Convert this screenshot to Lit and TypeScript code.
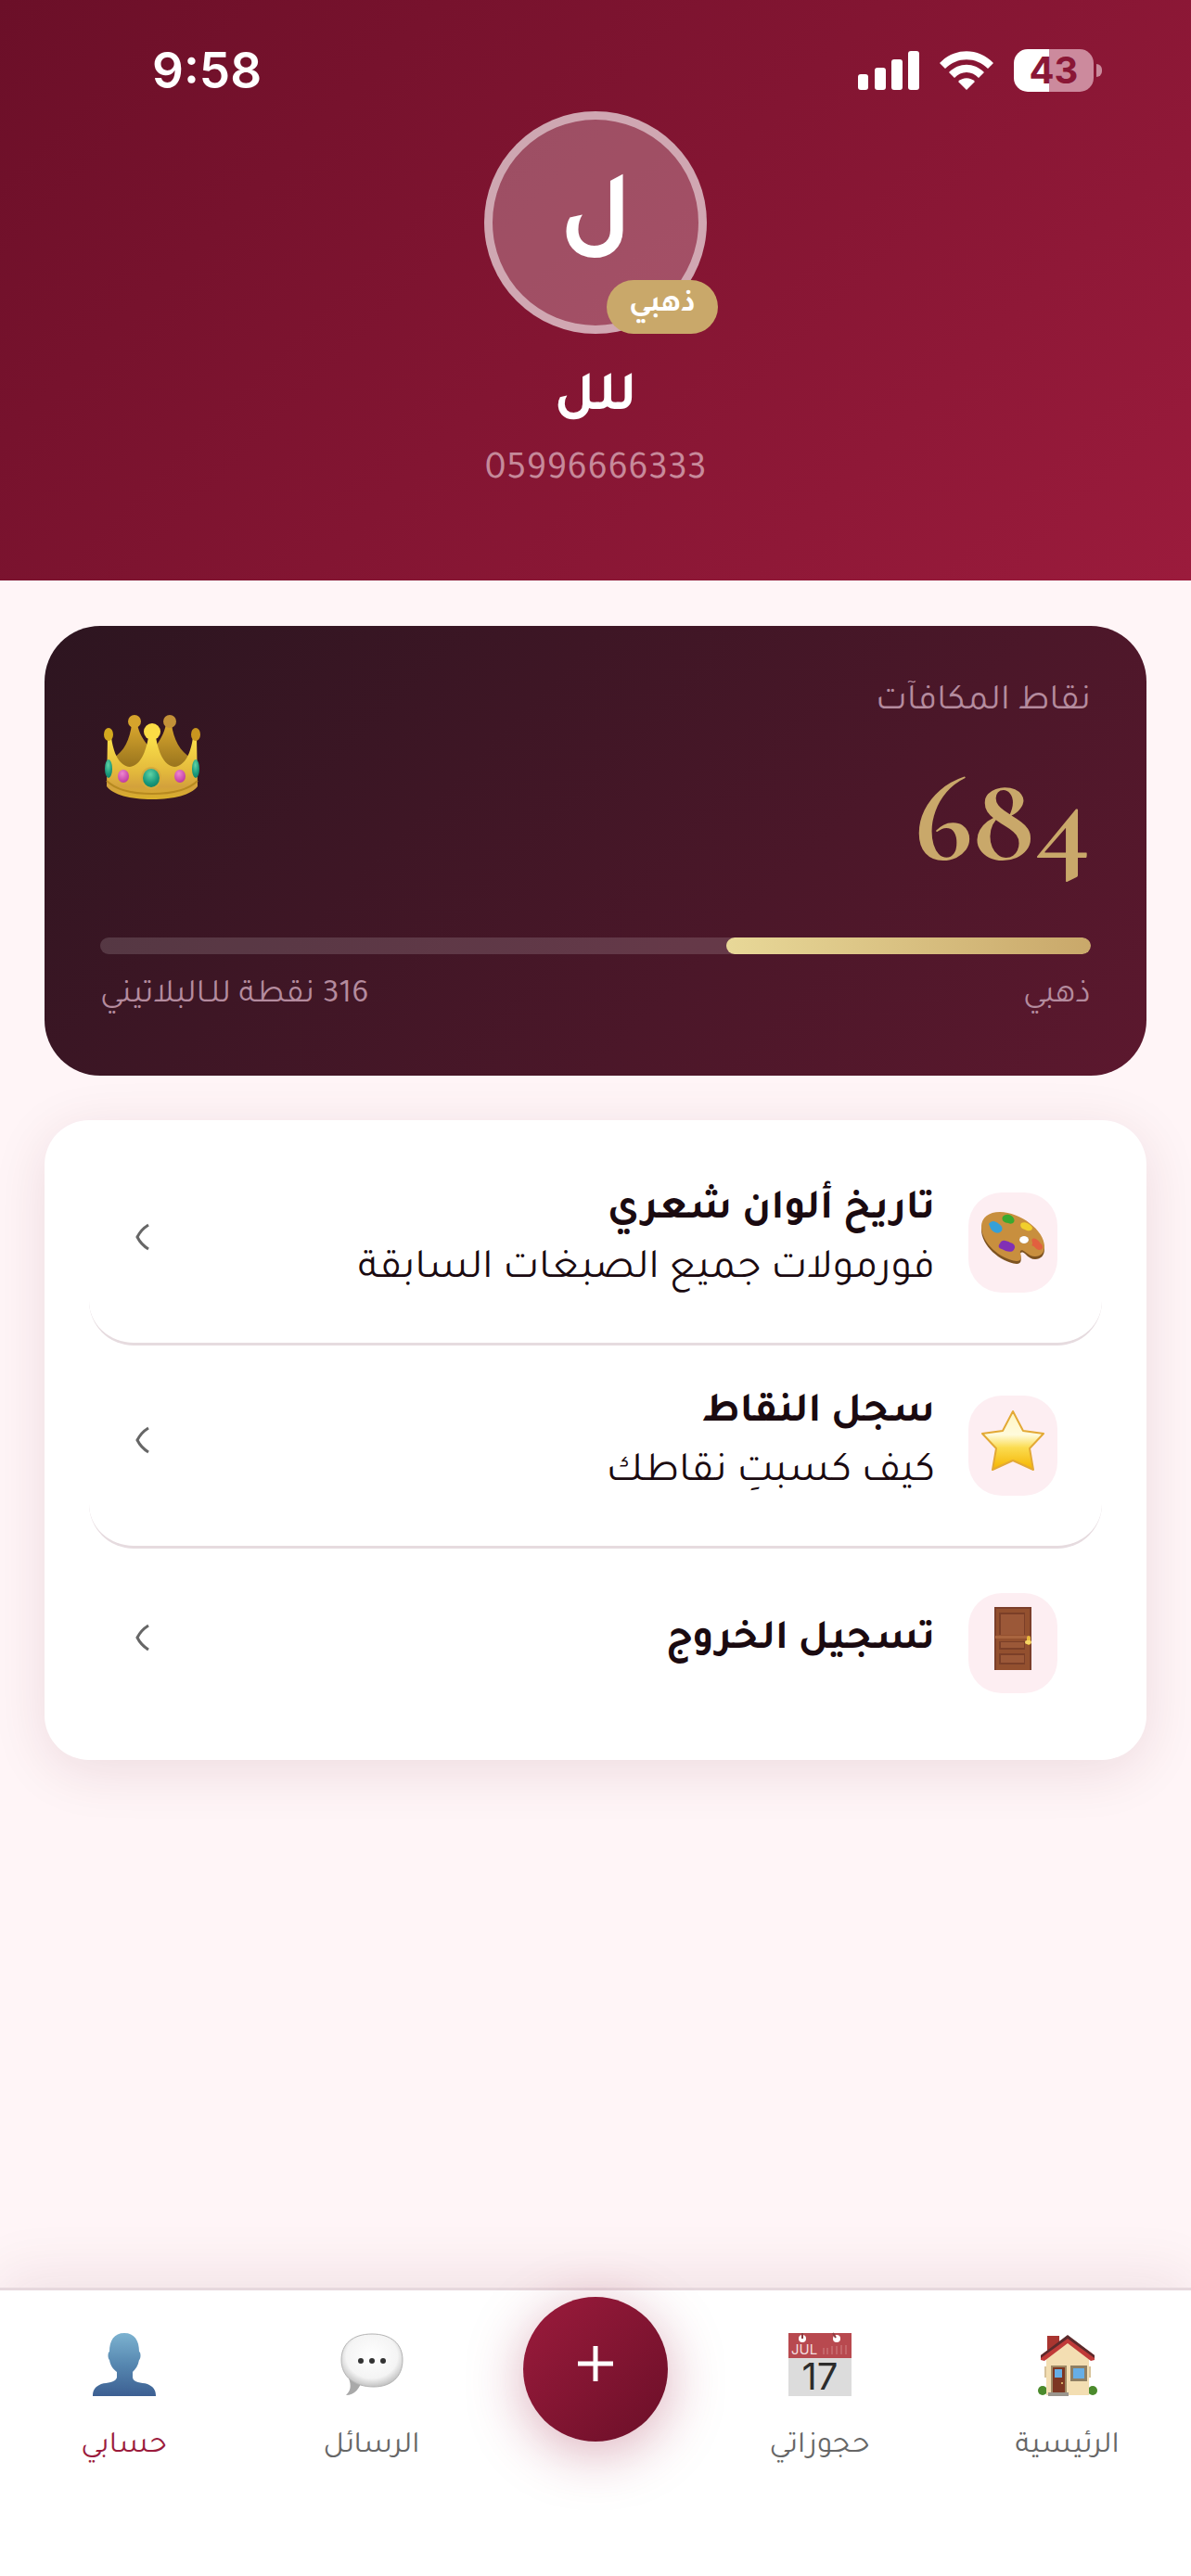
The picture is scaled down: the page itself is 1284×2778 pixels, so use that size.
import { LitElement, html, css, nothing, type TemplateResult } from "lit";
import { customElement } from "lit/decorators.js";

const crown = html`<svg viewBox="0 0 104 92" width="104" height="92" aria-hidden="true">
  <defs>
    <linearGradient id="crownFront" x1="0" y1="0" x2="0" y2="1">
      <stop offset="0" stop-color="#fbe04a" /><stop offset=".55" stop-color="#e3b93c" />
      <stop offset=".8" stop-color="#d3a13c" /><stop offset="1" stop-color="#d9b02a" />
    </linearGradient>
    <linearGradient id="crownBack" x1="0" y1="0" x2="0" y2="1">
      <stop offset="0" stop-color="#d9a72e" /><stop offset="1" stop-color="#94701c" />
    </linearGradient>
    <radialGradient id="gemGreen" cx=".45" cy=".3" r=".8">
      <stop offset="0" stop-color="#5fd3a6" /><stop offset=".6" stop-color="#1a9a7c" /><stop offset="1" stop-color="#0d7a62" />
    </radialGradient>
    <radialGradient id="gemPink" cx=".4" cy=".3" r=".8">
      <stop offset="0" stop-color="#ee86cf" /><stop offset="1" stop-color="#b92f9c" />
    </radialGradient>
  </defs>
  <path d="M10 46C22 40 28 26 30 10H36C38 20 42 26 48 34L40 60H18Z" fill="url(#crownBack)" />
  <path d="M94 46C82 40 75 26 73 10H67C65 20 61 26 56 34L64 60H86Z" fill="url(#crownBack)" />
  <circle cx="33" cy="7" r="7" fill="#d6a42c" />
  <circle cx="71" cy="7" r="7" fill="#c39138" />
  <path d="M4 24H8C10 40 16 55 28 56C40 54 45 40 48 24H56C59 40 64 54 76 56C88 55 94 40 96 24H100L101 77C94 86 76 91 52 91C28 91 10 86 3 77Z" fill="url(#crownFront)" />
  <path d="M3 71C12 80 30 85 52 85C74 85 92 80 101 71" fill="none" stroke="#b78a20" stroke-width="2" />
  <circle cx="52" cy="18" r="9" fill="#fbdc45" />
  <ellipse cx="5" cy="21" rx="5" ry="7" fill="#d3a91f" />
  <ellipse cx="99" cy="21" rx="5" ry="7" fill="#c8951f" />
  <ellipse cx="51" cy="68" rx="11" ry="12" fill="#d6ab3c" />
  <ellipse cx="51" cy="68" rx="9" ry="10" fill="url(#gemGreen)" />
  <ellipse cx="21" cy="66" rx="6" ry="7" fill="url(#gemPink)" />
  <ellipse cx="82" cy="66" rx="6" ry="7" fill="url(#gemPink)" />
  <ellipse cx="5" cy="58" rx="4" ry="10" fill="url(#gemGreen)" />
  <ellipse cx="99" cy="58" rx="4" ry="10" fill="url(#gemGreen)" />
</svg>`;

const palette = html`<svg viewBox="0 0 68 68" width="68" height="68" aria-hidden="true">
  <g transform="translate(0 6)">
    <path d="M0 19C0 8 8 3 20 3C42 3 68 22 68 40C68 47 64 51 58 51C54 51 51 49 47 45C44 43 42 43 42 46C43 50 44 56 38 56C20 54 0 36 0 19Z" fill="#7d5320" />
    <path fill-rule="evenodd" d="M0 16C0 6 8 0 20 0C42 0 68 20 68 37C68 44 64 48 58 48C54 48 51 46 47 43C44 40 41 41 42 44C43 48 44 53 38 53C20 51 0 33 0 16ZM41 30A5 4 0 1 0 51 30A5 4 0 1 0 41 30Z" fill="#c88f3e" />
    <ellipse cx="46" cy="30" rx="5" ry="4" fill="#fff" />
    <path d="M8 13C11 8 16 10 19 13C23 15 24 20 20 22C16 24 12 21 10 18Z" fill="#35a0d8" />
    <path d="M23 5C27 1 33 3 35 7C37 11 33 14 29 12C25 12 21 9 23 5Z" fill="#3aa92f" />
    <path d="M43 12C47 10 53 13 55 17C55 21 50 21 47 19C43 18 41 15 43 12Z" fill="#f1cf2c" />
    <path d="M55 29C59 27 62 32 65 35C67 38 66 41 62 41C58 40 58 37 54 36C57 34 53 31 55 29Z" fill="#e2603f" />
    <path d="M20 34C22 29 27 31 31 33C36 34 38 38 34 42C30 44 26 42 22 40C18 39 18 36 20 34Z" fill="#8130b5" />
  </g>
</svg>`;

const star = html`<svg viewBox="0 0 68 68" width="68" height="68" aria-hidden="true">
  <defs><linearGradient id="starFill" x1="0" y1="0" x2="0" y2="1">
    <stop offset="0" stop-color="#fff6c2" /><stop offset=".4" stop-color="#fffbdc" />
    <stop offset=".62" stop-color="#fbdc50" /><stop offset="1" stop-color="#f5b400" />
  </linearGradient></defs>
  <path d="M34 2L45 23L67 26L52 42L56 65L34 55L12 65L16 42L1 26L23 23Z" fill="url(#starFill)" stroke="#e3a935" stroke-width="2" stroke-linejoin="round" />
</svg>`;

const door = html`<svg viewBox="0 0 68 68" width="68" height="68" aria-hidden="true">
  <rect x="14" y="0" width="40" height="68" fill="#7b3f2b" />
  <rect x="16" y="2" width="36" height="66" fill="#93502f" />
  <rect x="19" y="6" width="28" height="24" fill="#7b3f28" />
  <rect x="21" y="8" width="25" height="22" fill="#9b5838" />
  <rect x="15" y="31" width="37" height="3" fill="#a9653f" />
  <rect x="19" y="37" width="28" height="9" fill="#7b3f28" />
  <rect x="21" y="38" width="25" height="6" fill="#9b5838" />
  <rect x="19" y="50" width="28" height="12" fill="#7b3f28" />
  <rect x="21" y="52" width="25" height="8" fill="#9b5838" />
  <rect x="49" y="31" width="4" height="10" rx="2" fill="#e9b93c" />
  <rect x="47" y="36" width="7" height="4" rx="2" fill="#f7d765" />
</svg>`;

const house = html`<svg viewBox="0 0 68 68" width="68" height="68" aria-hidden="true">
  <g transform="translate(2 2)">
    <circle cx="5" cy="60" r="5" fill="#4b8a2c" /><circle cx="59" cy="60" r="5" fill="#4b8a2c" />
    <path d="M10 1H23V12L10 22Z" fill="#a93530" />
    <path d="M9 24L32 4L55 24V65H9Z" fill="#f3deb2" />
    <path d="M7 34H9V46H7ZM55 34H57V46H55Z" fill="#d7c29a" />
    <path d="M32 1L61 22V27L57 28L32 9L7 28L3 27V22Z" fill="#c03a38" />
    <path d="M32 0L61 22V25L32 4L3 25V22Z" fill="#5b2a2c" />
    <rect x="14" y="33" width="17" height="29" fill="#a08a66" />
    <rect x="16" y="35" width="13" height="27" fill="#7d3723" />
    <rect x="18" y="37" width="8" height="9" fill="#66aee6" />
    <circle cx="26" cy="52" r="1" fill="#f2d680" />
    <rect x="35" y="33" width="18" height="17" fill="#8f7f63" />
    <rect x="38" y="36" width="12" height="11" fill="#66aee6" />
    <rect x="11" y="62" width="22" height="4" fill="#9a958d" />
  </g>
</svg>`;

const calendar = html`<svg viewBox="0 0 68 68" width="68" height="68" aria-hidden="true">
  <rect width="68" height="68" fill="#dcdcdc" />
  <rect width="68" height="27" fill="#b8494f" />
  <path d="M38 16V23M42 16V23M47 14V23M52 14V23M57 13V23M62 13V23" stroke="#c4666a" stroke-width="2" />
  <circle cx="15" cy="6" r="4" fill="#fff" /><path d="M15 0V6" stroke="#8c3b40" stroke-width="2" />
  <circle cx="52" cy="6" r="4" fill="#fff" /><path d="M48 0L51 5" stroke="#8c3b40" stroke-width="2" />
  <text class="cal-month" x="3" y="23">JUL</text>
  <text class="cal-day" x="34" y="61" text-anchor="middle">17</text>
</svg>`;

const bubble = html`<svg viewBox="0 0 68 68" width="68" height="68" aria-hidden="true">
  <defs><radialGradient id="bubbleFill" cx=".5" cy=".42" r=".6">
    <stop offset="0" stop-color="#fff" /><stop offset=".7" stop-color="#f4f4f4" /><stop offset="1" stop-color="#bcbcbc" />
  </radialGradient></defs>
  <path d="M6 67C11 62 12 57 9 49H24C21 60 15 67 6 67Z" fill="#a9a9a9" />
  <path d="M34 1C55 1 67 12 67 29C67 47 55 58 36 58C15 58 1 47 1 29C1 12 13 1 34 1Z" fill="url(#bubbleFill)" stroke="#b4b4b4" stroke-width="1" />
  <circle cx="22" cy="30" r="3" fill="#333" /><circle cx="34" cy="30" r="3" fill="#333" /><circle cx="46" cy="30" r="3" fill="#333" />
</svg>`;

const person = html`<svg viewBox="0 0 68 68" width="68" height="68" aria-hidden="true">
  <defs><linearGradient id="personFill" x1="0" y1="0" x2="0" y2="1">
    <stop offset="0" stop-color="#7cb2d0" /><stop offset=".5" stop-color="#5687b0" /><stop offset="1" stop-color="#3c5f92" />
  </linearGradient></defs>
  <path d="M34 0C45 0 50 8 50 20C52 21 52 27 50 29C49 35 46 39 43 42V48C44 54 52 53 59 55C66 58 68 62 68 68H0C0 62 2 58 9 55C16 53 24 54 26 48V42C22 39 19 35 18 29C16 27 16 21 18 20C18 8 23 0 34 0Z" fill="url(#personFill)" />
</svg>`;

const signal = html`<svg viewBox="0 0 66 42" width="66" height="42" aria-hidden="true" fill="#fff">
  <rect x="0" y="25" width="11" height="17" rx="3" /><rect x="18" y="18" width="12" height="24" rx="3" />
  <rect x="36" y="9" width="12" height="33" rx="3" /><rect x="54" y="0" width="12" height="42" rx="3" />
</svg>`;

const wifi = html`<svg viewBox="0 0 58 42" width="58" height="42" aria-hidden="true" fill="#fff">
  <path d="M0 13C16 -4 42 -4 58 13L52 19C39 6 19 6 6 19Z" />
  <path d="M10 23C21 12 37 12 48 23L42 29C35 21 23 21 16 29Z" />
  <path d="M20 33C25 28 33 28 38 33L29 42Z" />
</svg>`;

const chevron = html`<svg class="chevron" viewBox="0 0 16 30" width="16" height="30" aria-hidden="true">
  <path d="M14 2Q6 7 2 15Q6 23 14 28" fill="none" stroke="#666" stroke-width="3" />
</svg>`;

interface MenuEntry { icon: TemplateResult; title: string; sub?: string }
const menu: MenuEntry[] = [
  { icon: palette, title: "تاريخ ألوان شعري", sub: "فورمولات جميع الصبغات السابقة" },
  { icon: star, title: "سجل النقاط", sub: "كيف كسبتِ نقاطك" },
  { icon: door, title: "تسجيل الخروج" },
];

const tierStart = 500;
const tierEnd = 1000;
const points = 684;
const progress = ((points - tierStart) / (tierEnd - tierStart)) * 100;

@customElement("app-root")
export class AppRoot extends LitElement {
  static styles = css`
    :host {
      display: block;
      font-family: "Tajawal", "Noto Kufi Arabic", "DejaVu Sans", sans-serif;
      color: #1a0a10;
    }
    * { box-sizing: border-box; margin: 0; }
    svg { display: block; flex: none; overflow: visible; direction: ltr; }
    .page {
      min-height: 100vh;
      display: flex;
      flex-direction: column;
      background: #fff5f7;
    }
    .header {
      display: flex;
      flex-direction: column;
      align-items: center;
      padding-bottom: 92px;
      color: #fff;
      background: linear-gradient(135deg, #6b0f28 0%, #9b1b3c 100%);
    }
    .status {
      width: 100%;
      height: 120px;
      padding: 32px 96px 0 164px;
      display: flex;
      align-items: center;
      justify-content: space-between;
      font-family: "Inter", "Liberation Sans", sans-serif;
      font-size: 53px;
      font-weight: 600;
    }
    .status-icons { display: flex; align-items: center; gap: 22px; }
    .battery { display: flex; align-items: center; gap: 3px; }
    .cell {
      width: 86px;
      height: 46px;
      border-radius: 15px;
      display: flex;
      align-items: center;
      justify-content: center;
      font-size: 40px;
      font-weight: 700;
      line-height: 46px;
      color: #8a1736;
      background: linear-gradient(90deg, #fff 44%, #cc8a9d 44%);
    }
    .nub { width: 6px; height: 14px; border-radius: 0 6px 6px 0; background: #c98a9c; }
    .avatar {
      position: relative;
      width: 240px;
      height: 240px;
      padding-top: 4px;
      border-radius: 50%;
      border: 9px solid rgba(255, 255, 255, 0.5);
      background: rgba(255, 255, 255, 0.25);
      display: flex;
      align-items: center;
      justify-content: center;
      font-size: 108px;
      font-weight: 700;
    }
    .badge {
      position: absolute;
      right: -21px;
      bottom: -9px;
      height: 58px;
      padding: 0 24px;
      border-radius: 30px;
      background: #c9a86a;
      font-size: 33px;
      line-height: 58px;
    }
    .name { margin-top: 36px; font-size: 60px; font-weight: 700; line-height: 72px; }
    .phone { margin-top: 16px; font-size: 42px; line-height: 50px; color: rgba(255, 240, 245, 0.55); }
    .content { display: flex; flex-direction: column; gap: 48px; padding: 49px 48px; }
    .card {
      padding: 60px;
      border-radius: 60px;
      background: linear-gradient(135deg, #2d1520 0%, #5c182e 100%);
      color: #b48b9e;
    }
    .card-top { display: flex; justify-content: space-between; }
    .card-label { font-size: 39px; line-height: 48px; }
    .points {
      margin-top: 20px;
      font-family: "Cormorant Garamond", "Liberation Serif", serif;
      font-size: 135px;
      line-height: 160px;
      font-weight: 700;
      color: #c9a86a;
    }
    .crown { padding: 36px 0 0 4px; }
    .track {
      margin-top: 48px;
      height: 18px;
      border-radius: 9px;
      background: rgba(255, 255, 255, 0.15);
      overflow: hidden;
    }
    .fill { height: 100%; border-radius: 9px; background: linear-gradient(90deg, #e8d898, #c9a86a); }
    .card-foot { display: flex; justify-content: space-between; margin-top: 21px; font-size: 36px; line-height: 50px; }
    .menu {
      list-style: none;
      padding: 24px 48px;
      border-radius: 48px;
      background: #fff;
      box-shadow: 0 12px 60px rgba(90, 20, 40, 0.11);
    }
    .item {
      width: 100%;
      display: flex;
      align-items: center;
      gap: 36px;
      padding: 48px;
      border: 0 solid #e6dbdf;
      border-radius: 48px;
      background: none;
      font: inherit;
      font-size: 45px;
      color: inherit;
      text-align: start;
      cursor: pointer;
    }
    .item.lined { padding: 45px 48px; border-bottom-width: 3px; }
    .icon {
      flex: none;
      width: 96px;
      height: 108px;
      padding-bottom: 10px;
      display: flex;
      align-items: center;
      justify-content: center;
      border-radius: 36px;
      background: #fdeef2;
    }
    .text { flex: 1; display: flex; flex-direction: column; gap: 4px; line-height: 60px; padding-bottom: 2px; }
    .title { font-weight: 700; }
    .chevron { margin-left: 2px; margin-bottom: 12px; }
    .nav {
      margin-top: auto;
      min-height: 311px;
      display: grid;
      grid-template-columns: 1fr 1fr 216px 1fr 1fr;
      align-items: start;
      justify-items: center;
      border-top: 3px solid #e6d8dd;
      background: #fff;
      box-shadow: 0 -12px 60px rgba(90, 20, 40, 0.09);
    }
    .tab {
      display: flex;
      flex-direction: column;
      align-items: center;
      gap: 36px;
      padding-top: 46px;
      font-size: 33px;
      line-height: 40px;
      color: #666;
      text-decoration: none;
    }
    .tab.active { color: #9b1b3c; }
    .add {
      margin-top: 7px;
      width: 156px;
      height: 156px;
      padding: 0 0 12px;
      border: 0;
      border-radius: 50%;
      display: flex;
      align-items: center;
      justify-content: center;
      background: linear-gradient(135deg, #9b1b3c, #6b0f28);
      box-shadow: 0 12px 60px rgba(155, 27, 60, 0.35);
      cursor: pointer;
    }
    .cal-month { font: 400 15px "Inter", sans-serif; fill: #f3dede; }
    .cal-day { font: 400 40px "Inter", sans-serif; fill: #2c2c2c; }
  `;

  private tab(icon: TemplateResult, label: string, active = false) {
    return html`<a class="tab ${active ? "active" : ""}" href="#" aria-current=${active ? "page" : nothing}>${icon}<span>${label}</span></a>`;
  }

  render() {
    return html`
      <div class="page" dir="rtl" lang="ar">
        <header class="header">
          <div class="status" dir="ltr">
            <span>9:58</span>
            <div class="status-icons">
              ${signal}${wifi}
              <div class="battery"><span class="cell">43</span><span class="nub"></span></div>
            </div>
          </div>
          <div class="avatar">ل<span class="badge">ذهبي</span></div>
          <h1 class="name">للل</h1>
          <p class="phone">05996666333</p>
        </header>

        <main class="content">
          <section class="card">
            <div class="card-top">
              <div>
                <p class="card-label">نقاط المكافآت</p>
                <p class="points">${points}</p>
              </div>
              <div class="crown">${crown}</div>
            </div>
            <div class="track" role="progressbar" aria-label="نقاط المكافآت" aria-valuemin=${tierStart} aria-valuemax=${tierEnd} aria-valuenow=${points}>
              <div class="fill" style="width:${progress}%"></div>
            </div>
            <div class="card-foot"><span>ذهبي</span><span>${tierEnd - points} نقطة للـالبلاتيني</span></div>
          </section>

          <ul class="menu">
            ${menu.map((m) => html`<li>
              <button type="button" class="item ${m.sub ? "lined" : ""}">
                <span class="icon">${m.icon}</span>
                <span class="text"><span class="title">${m.title}</span>${m.sub ? html`<span>${m.sub}</span>` : nothing}</span>
                ${chevron}
              </button>
            </li>`)}
          </ul>
        </main>

        <nav class="nav">
          ${this.tab(house, "الرئيسية")}
          ${this.tab(calendar, "حجوزاتي")}
          <button type="button" class="add" aria-label="حجز جديد">
            <svg viewBox="0 0 38 38" width="38" height="38" aria-hidden="true"><path d="M19 0V38M0 19H38" stroke="#fff" stroke-width="5" /></svg>
          </button>
          ${this.tab(bubble, "الرسائل")}
          ${this.tab(person, "حسابي", true)}
        </nav>
      </div>
    `;
  }
}
